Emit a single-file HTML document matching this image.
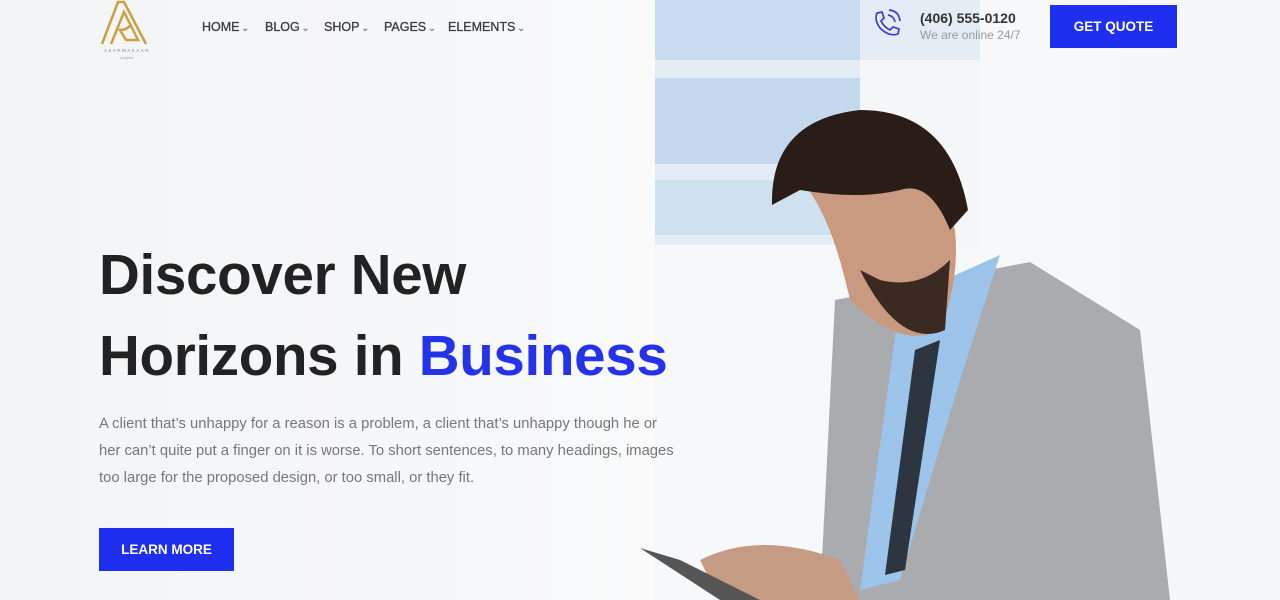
<!DOCTYPE html>
<html><head><meta charset="utf-8"><style>
*{margin:0;padding:0;box-sizing:border-box}
body{width:1280px;height:600px;overflow:hidden;position:relative;font-family:"Liberation Sans",sans-serif;background:linear-gradient(90deg,#f3f4f6 0%,#f7f8f9 40%,#fbfbfc 55%,#f4f6f8 100%)}
.bg{position:absolute;inset:0}
nav a{position:absolute;top:20px;font-size:12.5px;color:#3b3b3b;text-decoration:none;-webkit-text-stroke:0.3px #3b3b3b}
nav a:after{content:"⌄";color:#ccc;font-size:9px;margin-left:2px}
h1{position:absolute;left:99px;top:234px;font-size:56.5px;line-height:81px;font-weight:bold;color:#222;letter-spacing:-0.3px}
h1 span{color:#2433e8}
p.t{position:absolute;left:99px;top:411px;width:580px;font-size:14.8px;line-height:27px;color:#777}
.btn{position:absolute;background:#1f2ff0;color:#fff;font-weight:bold;font-size:13.5px;display:flex;align-items:center;justify-content:center}
</style></head><body>
<svg class="bg" width="1280" height="600">
<rect x="655" y="0" width="325" height="245" fill="#e4edf6"/>
<rect x="655" y="0" width="205" height="60" fill="#c7dcf0"/>
<rect x="655" y="78" width="205" height="86" fill="#c4d9ee"/>
<rect x="655" y="180" width="205" height="55" fill="#cfe0f1"/>
<rect x="860" y="60" width="120" height="185" fill="#f4f6f8"/>
<rect x="655" y="245" width="330" height="355" fill="#f7f8fa"/>
<path d="M835 300 L1030 262 L1140 330 L1170 600 L820 600 Z" fill="#a9abae"/>
<path d="M900 300 L1000 255 L960 380 L900 580 L860 590 Z" fill="#9cc4ea"/>
<path d="M915 350 L940 340 L905 570 L885 575 Z" fill="#2d3640"/>
<path d="M800 180 Q830 210 850 300 Q900 350 940 330 Q960 280 955 230 L940 190 Z" fill="#c99a80"/>
<path d="M860 270 Q900 350 945 330 L950 260 Q920 290 880 280 Z" fill="#3a2a22"/>
<path d="M772 205 Q770 120 860 110 Q950 110 968 210 L950 230 Q930 180 900 190 Q860 200 800 190 Z" fill="#2a1d17"/>
<path d="M700 560 Q760 530 840 560 L860 600 L720 600 Z" fill="#c59b83"/>
<path d="M640 548 L680 560 L760 600 L720 600 Z" fill="#555"/>
</svg>
<svg style="position:absolute;left:98px;top:0" width="60" height="62" viewBox="0 0 60 62">
<path d="M4 44 L20 2 L26 2 L48 44 M13 44 L26 12 L40 40 H28 L22 30 Q30 30 33 24" fill="none" stroke="#c9a042" stroke-width="2.5"/>
<text x="29" y="52" font-size="4.5" text-anchor="middle" fill="#888" letter-spacing="1.5">AZARMAKAAN</text>
<text x="29" y="59" font-size="3.5" text-anchor="middle" fill="#aaa">Analytics</text>
</svg>
<nav><a style="left:202px">HOME</a><a style="left:265px">BLOG</a><a style="left:324px">SHOP</a><a style="left:384px">PAGES</a><a style="left:448px">ELEMENTS</a></nav>
<svg style="position:absolute;left:871px;top:9px" width="32" height="30" viewBox="0 0 32 30" fill="none" stroke="#3a3fd0" stroke-width="1.7"><path d="M6 4 L11 3 L13 9 L10 12 Q13 18 19 21 L22 18 L28 20 L27 25 Q18 28 9 19 Q3 11 6 4Z"/><path d="M17 6 Q23 7 24 13 M18 1 Q28 2 29 12"/></svg>
<div style="position:absolute;left:920px;top:10px;font-size:14px;font-weight:bold;color:#333">(406) 555-0120</div>
<div style="position:absolute;left:920px;top:28px;font-size:12px;color:#999">We are online 24/7</div>
<div class="btn" style="left:1050px;top:5px;width:127px;height:43px">GET QUOTE</div>
<h1>Discover New<br>Horizons in <span>Business</span></h1>
<p class="t">A client that’s unhappy for a reason is a problem, a client that’s unhappy though he or her can’t quite put a finger on it is worse. To short sentences, to many headings, images too large for the proposed design, or too small, or they fit.</p>
<div class="btn" style="left:99px;top:528px;width:135px;height:43px">LEARN MORE</div>
</body></html>
